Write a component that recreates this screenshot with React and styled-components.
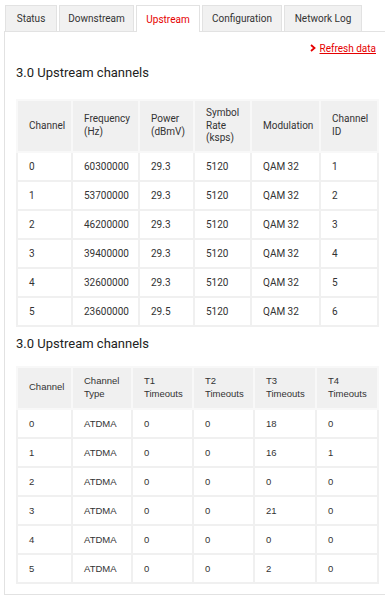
import React from 'react';
import styled, {createGlobalStyle} from 'styled-components';

const GlobalStyle = createGlobalStyle`
  body {
    margin: 0;
    overflow: hidden;
    background: #fff;
    font-family: Roboto, "Liberation Sans", sans-serif;
    color: #333;
  }
`;

const Page = styled.div`
  padding-top: 5px;
  width: 385px;
  overflow: hidden;
`;

const TabBar = styled.div`
  display: flex;
  gap: 2px;
  padding-left: 5px;
  height: 26px;
`;

const Tab = styled.div`
  display: flex;
  align-items: center;
  justify-content: center;
  width: ${(p) => p.w}px;
  box-sizing: border-box;
  height: ${(p) => (p.active ? 27 : 26)}px;
  border: 1px solid #e2e2e2;
  border-bottom: none;
  background: ${(p) => (p.active ? '#fff' : '#f1f1f1')};
  color: ${(p) => (p.active ? '#e60000' : '#333')};
  font-size: 10px;
  position: relative;
  z-index: ${(p) => (p.active ? 2 : 0)};
`;

const Panel = styled.div`
  margin-left: 4px;
  width: 420px;
  border: 1px solid #e2e2e2;
  border-right: none;
  box-sizing: border-box;
  padding: 9px 0 10px 11px;
  position: relative;
  z-index: 1;
`;

const RefreshRow = styled.div`
  width: 360px;
  display: flex;
  justify-content: flex-end;
  align-items: center;
  gap: 4px;
  height: 14px;
  font-size: 10px;
  color: #e60000;
`;

const Chevron = styled.svg`
  width: 6px;
  height: 8px;
`;

const RefreshLink = styled.a`
  color: #e60000;
  text-decoration: underline;
`;

const Heading = styled.h2`
  margin: ${(p) => p.top}px 0 0 0;
  font-size: 13px;
  font-weight: 400;
  line-height: 16px;
  color: #222;
`;

const Table = styled.table`
  margin-top: ${(p) => p.top}px;
  width: 361px;
  border-collapse: collapse;
  table-layout: fixed;
  font-family: ${(p) => (p.plain ? '"Liberation Sans", Arial, sans-serif' : 'Roboto, "Liberation Sans", sans-serif')};
  font-size: ${(p) => (p.plain ? 9.5 : 10)}px;
`;

const HeadCell = styled.th`
  background: #f0f0f0;
  border: 2px solid #f8f8f8;
  text-align: left;
  font-weight: 400;
  line-height: 12.5px;
  padding: ${(p) => p.pad}px 4px ${(p) => p.pad}px 11px;
  color: #333;
  vertical-align: middle;
`;

const Cell = styled.td`
  border: 2px solid #f0f0f0;
  height: 27px;
  padding: 0 4px 0 11px;
  color: #333;
`;

const upstream = [
  ['0', '60300000', '29.3', '5120', 'QAM 32', '1'],
  ['1', '53700000', '29.3', '5120', 'QAM 32', '2'],
  ['2', '46200000', '29.3', '5120', 'QAM 32', '3'],
  ['3', '39400000', '29.3', '5120', 'QAM 32', '4'],
  ['4', '32600000', '29.3', '5120', 'QAM 32', '5'],
  ['5', '23600000', '29.5', '5120', 'QAM 32', '6'],
];

const timeouts = [
  ['0', 'ATDMA', '0', '0', '18', '0'],
  ['1', 'ATDMA', '0', '0', '16', '1'],
  ['2', 'ATDMA', '0', '0', '0', '0'],
  ['3', 'ATDMA', '0', '0', '21', '0'],
  ['4', 'ATDMA', '0', '0', '0', '0'],
  ['5', 'ATDMA', '0', '0', '2', '0'],
];

const tabs = [
  {label: 'Status', w: 52},
  {label: 'Downstream', w: 75},
  {label: 'Upstream', w: 64, active: true},
  {label: 'Configuration', w: 80},
  {label: 'Network Log', w: 78},
];

const DataTable = ({cols, head, rows, pad, top, plain}) => (
  <Table top={top} plain={plain}>
    <colgroup>
      {cols.map((w, i) => <col key={i} style={{width: w}} />)}
    </colgroup>
    <thead>
      <tr>
        {head.map((h, i) =>
          <HeadCell key={i} pad={pad}>
            {h.map((line, j) => <div key={j}>{line}</div>)}
          </HeadCell>
        )}
      </tr>
    </thead>
    <tbody>
      {rows.map((row, i) =>
        <tr key={i}>
          {row.map((c, j) => <Cell key={j}>{c}</Cell>)}
        </tr>
      )}
    </tbody>
  </Table>
);

const App = () => (
  <Page>
    <GlobalStyle />
    <TabBar>
      {tabs.map((t) =>
        <Tab key={t.label} w={t.w} active={t.active}>{t.label}</Tab>
      )}
    </TabBar>
    <Panel>
      <RefreshRow>
        <Chevron viewBox="0 0 6 8">
          <path d="M1 1 L4.5 4 L1 7" fill="none" stroke="#e60000" strokeWidth="1.8" />
        </Chevron>
        <RefreshLink>Refresh data</RefreshLink>
      </RefreshRow>
      <Heading top={10}>3.0 Upstream channels</Heading>
      <DataTable
        top={18}
        pad={6}
        cols={[55, 67, 55, 57, 69, 58]}
        head={[['Channel'], ['Frequency', '(Hz)'], ['Power', '(dBmV)'], ['Symbol', 'Rate', '(ksps)'], ['Modulation'], ['Channel', 'ID']]}
        rows={upstream}
      />
      <Heading top={9}>3.0 Upstream channels</Heading>
      <DataTable
        top={14}
        pad={7.5}
        plain
        cols={[55, 60, 61, 61, 62, 62]}
        head={[['Channel'], ['Channel', 'Type'], ['T1', 'Timeouts'], ['T2', 'Timeouts'], ['T3', 'Timeouts'], ['T4', 'Timeouts']]}
        rows={timeouts}
      />
    </Panel>
  </Page>
);

export default App;
